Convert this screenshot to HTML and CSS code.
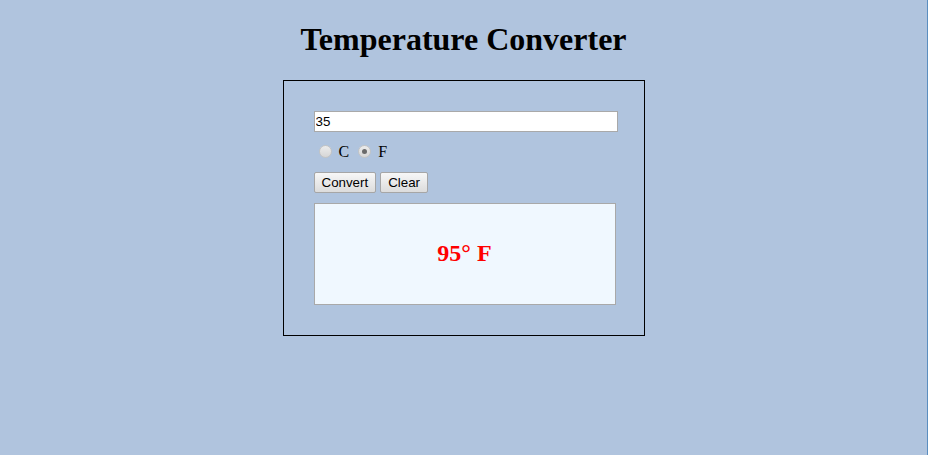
FILE: index.html
```html
<!DOCTYPE html>
<html>
<head>
<meta charset="utf-8">
<title>Temperature Converter</title>
<link rel="stylesheet" href="styles.css">
</head>
<body>
<h1 class="title">Temperature Converter</h1>
<div class="panel">
  <input class="temp-input" type="text" value="35">
  <div class="units">
    <input class="radio" type="radio" name="unit" id="uc">
    <label class="unit-label" for="uc">C</label>
    <input class="radio" type="radio" name="unit" id="uf" checked>
    <label class="unit-label" for="uf">F</label>
  </div>
  <div class="actions">
    <button class="btn">Convert</button>
    <button class="btn">Clear</button>
  </div>
  <div class="result">95° F</div>
</div>
</body>
</html>
```
FILE: styles.css
```css
html {
  background: #b0c4de;
  border-right: 1px solid #5a8ec0;
  min-height: 100%;
}
body {
  margin: 8px;
  font-family: "Liberation Serif", "Times New Roman", serif;
  font-size: 16px;
  color: #000;
}
.title {
  font-size: 32px;
  font-weight: bold;
  text-align: center;
  margin: 13.44px 0 21.44px;
}
.panel {
  width: 300px;
  margin: 0 auto;
  padding: 30px;
  border: 1px solid #000;
}
.temp-input {
  display: block;
  box-sizing: border-box;
  width: 304px;
  height: 21px;
  margin: 0;
  padding: 1px 1px;
  border: 1px solid #a9a9a9;
  background: #fff;
  font-family: "Liberation Sans", Arial, sans-serif;
  font-size: 13.33px;
  color: #000;
  outline: none;
}
.units {
  display: flex;
  align-items: center;
  height: 26px;
  margin-top: 7px;
}
.radio {
  appearance: none;
  -webkit-appearance: none;
  box-sizing: border-box;
  width: 13px;
  height: 13px;
  margin: 0 7px 0 5px;
  border-radius: 50%;
  border: 1px solid #c4c4c4;
  background: linear-gradient(#ececec, #d6d6d6);
  position: relative;
}
.radio + .unit-label + .radio {
  margin-left: 9px;
}
.radio:checked::after {
  content: "";
  position: absolute;
  left: 3px;
  top: 3px;
  width: 5px;
  height: 5px;
  border-radius: 50%;
  background: #6a6a6a;
}
.unit-label {
  font-size: 16px;
  line-height: 18px;
}
.actions {
  display: flex;
  gap: 4px;
  margin-top: 7px;
}
.btn {
  box-sizing: border-box;
  height: 21px;
  margin: 0;
  padding: 0 7px;
  border: 1px solid #a6a6a6;
  border-radius: 2px;
  background: linear-gradient(#f7f7f7, #dcdcdc);
  font-family: "Liberation Sans", Arial, sans-serif;
  font-size: 13.33px;
  color: #000;
}
.result {
  box-sizing: border-box;
  height: 102px;
  width: 302px;
  margin-top: 10px;
  border: 1px solid #a9a9a9;
  background: #f0f8ff;
  display: flex;
  align-items: center;
  justify-content: center;
  color: #ff0000;
  font-weight: bold;
  font-size: 24px;
}
```
